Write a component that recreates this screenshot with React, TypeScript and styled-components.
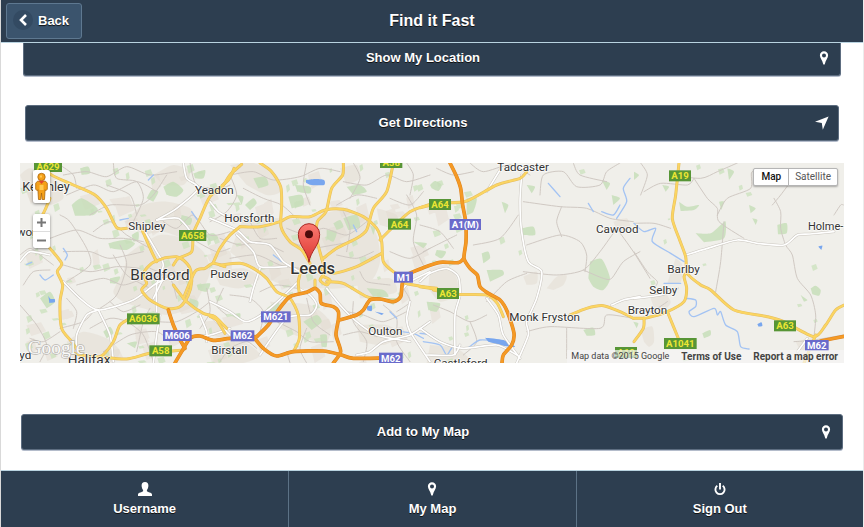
import React from "react";
import styled, { createGlobalStyle } from "styled-components";

const GlobalStyle = createGlobalStyle`
  *, *::before, *::after { box-sizing: border-box; }
  body {
    margin: 0;
    background: #fff;
    font-family: "Liberation Sans", Arial, sans-serif;
  }
  button { font-family: inherit; cursor: pointer; }
`;

const navy = "#2d3e50";

const Page = styled.div`
  display: flex;
  flex-direction: column;
  min-height: 100vh;
  border-left: 1px solid #d9d9d9;
  border-right: 1px solid #ececec;
`;

const Header = styled.header`
  display: grid;
  grid-template-columns: 1fr auto 1fr;
  align-items: center;
  padding: 3px 5px;
  background: ${navy};
  border-bottom: 1px solid #b9d3e0;
`;

const Title = styled.h1`
  margin: 0;
  color: #fff;
  font-size: 16px;
  line-height: 20px;
  text-shadow: 0 1px 0 #111;
`;

const BackButton = styled.button`
  display: flex;
  align-items: center;
  justify-self: start;
  gap: 5px;
  height: 36px;
  padding: 0 12px 2px 6px;
  color: #fff;
  font-size: 13px;
  font-weight: bold;
  text-shadow: 0 1px 1px #111;
  background: #3b546d;
  border: 1px solid #5e7890;
  border-radius: 3px;
`;

const BackDisc = styled.span`
  display: grid;
  place-items: center;
  width: 20px;
  height: 20px;
  border-radius: 50%;
  background: #334a62;
`;

const Main = styled.main`
  display: flex;
  flex-direction: column;
  flex: 1;
  padding: 0 19px 19px;
`;

const ActionButton = styled.button<{ $inset: number; $docked?: boolean }>`
  display: flex;
  align-items: center;
  height: ${(p) => (p.$docked ? 33 : 36)}px;
  margin: 0 ${(p) => p.$inset}px;
  padding: ${(p) => (p.$docked ? "0 7px 3px" : "0 7px 1px")};
  color: #fff;
  font-size: 13px;
  font-weight: bold;
  text-shadow: 0 1px 0 #111;
  background: ${navy};
  border: 1px solid #5d6d80;
  border-top-width: ${(p) => (p.$docked ? 0 : 1)}px;
  border-radius: ${(p) => (p.$docked ? "0 0 3px 3px" : "3px")};
  box-shadow: 0 1px 0 #b4bccb;
`;

const ActionLabel = styled.span`
  flex: 1;
  text-align: center;
`;

const ActionIcon = styled.span`
  display: grid;
  place-items: center;
  width: 18px;
`;

const DirectionsRow = styled.div`
  display: grid;
  margin-top: 29px;
`;

const MapFrame = styled.section`
  position: relative;
  height: 200px;
  margin: 22px 0 51px;
  overflow: hidden;
  background: #f0efea;
  font-family: Roboto, sans-serif;
`;

const MapDrawing = styled.svg`
  display: block;
  width: 100%;
  height: 100%;
`;

const LeftControls = styled.div`
  position: absolute;
  top: 7px;
  left: 13px;
  display: flex;
  flex-direction: column;
  gap: 11px;
`;

const ControlBox = styled.div`
  width: 17px;
  background: #fff;
  border-radius: 2px;
  box-shadow: 0 1px 3px rgba(0, 0, 0, 0.45);
`;

const ControlButton = styled.button<{ $tall?: boolean }>`
  display: grid;
  place-items: center;
  width: 17px;
  height: ${(p) => (p.$tall ? 33 : 17)}px;
  padding: 0;
  background: none;
  border: 0;
  & + & { border-top: 1px solid #ddd; }
`;

const MapTypes = styled.div`
  position: absolute;
  top: 5px;
  right: 6px;
  display: flex;
  background: #fff;
  border: 1px solid #b5b5b5;
  border-radius: 2px;
  box-shadow: 0 1px 2px rgba(0, 0, 0, 0.3);
`;

const MapType = styled.button<{ $active?: boolean }>`
  height: 16px;
  padding: 0 7px;
  background: none;
  border: 0;
  color: ${(p) => (p.$active ? "#111" : "#565656")};
  font-size: 10px;
  line-height: 16px;
  font-weight: ${(p) => (p.$active ? 500 : 400)};
  & + & { padding: 0 6px; border-left: 1px solid #b5b5b5; }
`;

const Attribution = styled.div`
  position: absolute;
  right: 0;
  bottom: 0;
  display: flex;
  gap: 12px;
  padding: 0 6px 0 4px;
  color: #444;
  font-size: 10px;
  line-height: 13px;
  background: rgba(245, 245, 245, 0.7);
`;

const Credit = styled.span`
  font-size: 9px;
`;

const MapLink = styled.a`
  color: #444;
  font-weight: bold;
  text-decoration: none;
`;

const Footer = styled.nav`
  display: grid;
  grid-template-columns: repeat(3, 1fr);
  background: ${navy};
  border-top: 1px solid #b9d3e0;
`;

const Tab = styled.a`
  display: flex;
  flex-direction: column;
  align-items: center;
  gap: 4px;
  padding: 10px 0;
  color: #fff;
  font-size: 13px;
  line-height: 16px;
  font-weight: bold;
  text-decoration: none;
  text-shadow: 0 1px 0 #111;
  & + & { border-left: 1px solid #5c7286; }
`;

const PinIcon = () => (
  <svg width="10" height="16" viewBox="0 0 10 16" aria-hidden="true">
    <path fill="#fff" fillRule="evenodd" d="M5 1.2a4.1 4.1 0 0 1 4.1 4.2c0 2.500-2.500 4.600-3.200 8.300a.9.9 0 0 1-1.800 0C3.400 10 .9 7.900.9 5.400A4.100 4.100 0 0 1 5 1.200zm0 2.200a2 2 0 1 0 0 4 2 2 0 0 0 0-4z" />
  </svg>
);

const ArrowIcon = () => (
  <svg width="14" height="14" viewBox="0 0 14 14" aria-hidden="true">
    <path fill="#fff" d="M13.600.4 0 5.800l6.800 1.100 1 6.800z" />
  </svg>
);

const UserIcon = () => (
  <svg width="16" height="16" viewBox="0 0 16 16" aria-hidden="true">
    <path fill="#fff" d="M8 1c2.300 0 3.500 1.500 3.400 3.800-.1 1.700-.7 3.300-1.500 4.200v1.300c.6.900 5.100 1.300 5.100 3.300v1.400H1v-1.400c0-2 4.500-2.400 5.100-3.300V9C5.300 8.100 4.700 6.500 4.600 4.800 4.500 2.500 5.700 1 8 1z" />
  </svg>
);

const PowerIcon = () => (
  <svg width="14" height="16" viewBox="0 0 14 16" fill="none" stroke="#fff" strokeWidth="1.900" aria-hidden="true">
    <path d="M7 2v6.500M4.300 4.800a4.600 4.600 0 1 0 5.400 0" />
  </svg>
);

const BackIcon = () => (
  <svg width="10" height="12" viewBox="0 0 10 12" fill="none" stroke="#fff" strokeWidth="2.600" aria-hidden="true">
    <path d="M8 1 3 6l5 5" />
  </svg>
);

const Pegman = () => (
  <svg width="15" height="29" viewBox="0 0 15 29" aria-hidden="true">
    <g fill="#f5a11a" stroke="#a9660c" strokeWidth=".8">
      <path d="M3.500 9.200h8l1.800 2v6l-1.500 1.500-.7-1-.6 9.800H8.200L7.500 21l-.7 6.500H4.500l-.6-9.800-.7 1-1.500-1.500v-6z" />
      <circle cx="7.500" cy="5" r="3.700" />
    </g>
    <path fill="#e2472f" d="M4.600 8.800h5.800L7.500 12z" />
    <path fill="#ffcb55" d="M5.500 13h4v5h-4zM6 3.500h2v2H6z" />
  </svg>
);

type Pt = [number, number];

/* Parses "x,y x,y" and draws a smooth line through the points. */
const curve = (src: string, dx = 0) => {
  const p = src.split(" ").map((s) => {
    const [x, y] = s.split(",").map(Number);
    return [x + dx, y] as Pt;
  });
  let d = `M${p[0][0]} ${p[0][1]}`;
  for (let i = 0; i < p.length - 1; i++) {
    const a = p[Math.max(i - 1, 0)];
    const b = p[i];
    const c = p[i + 1];
    const e = p[Math.min(i + 2, p.length - 1)];
    d += `C${b[0] + (c[0] - a[0]) / 8} ${b[1] + (c[1] - a[1]) / 8} ${c[0] - (e[0] - b[0]) / 8} ${c[1] - (e[1] - b[1]) / 8} ${c[0]} ${c[1]}`;
  }
  return d;
};

/* The map is drawn in four sheets, west to east, each with its own x origin. */
type Sheet = {
  x: number;
  urban: string[];
  green: string[];
  lanes: string[];
  white: string[];
  water: string[];
  lakes: string[];
  main: string[];
  motorway: string[];
};

const sheets: Sheet[] = [
  {
    x: 0,
    urban: [
      "30,60 60,40 120,60 150,90 160,130 120,150 60,140",
      "345,200 400,150 470,140 540,160 560,210 530,250 460,230 400,240",
      "390,270 450,240 520,250 580,290 600,350 570,420 540,460 470,480 400,460 340,440 310,410 340,350 350,300",
      "430,60 490,30 540,50 520,90 460,90",
      "170,560 220,530 290,550 330,590 300,620 190,620",
      "590,300 660,290 660,390 620,370",
      "580,500 630,500 660,550 600,540",
    ],
    green: [
      "185,150 215,130 262,160 250,180 195,182",
      "460,95 490,80 520,105 500,125 470,120",
      "295,265 340,255 375,265 350,285 300,280",
      "410,130 425,105 445,110 430,140",
      "90,430 120,410 135,440 110,460",
      "585,240 610,235 625,250 600,260",
      "280,530 300,515 310,535 290,550",
      "515,180 545,190 540,210 510,205",
      "365,240 385,230 385,255 370,260",
      "540,430 565,440 560,460 535,450",
      "210,40 235,35 240,55 215,60",
      "560,390 600,385 590,410 565,405",
      "300,370 330,365 320,385 300,385",
      "350,565 380,560 375,580",
      "550,55 585,45 580,70 555,70",
    ],
    lanes: [
      "160,60 230,50 290,65 350,35 420,60 500,50",
      "170,120 250,90 310,110 380,80 440,110",
      "240,180 300,150 390,150 430,120 470,60",
      "120,250 200,225 270,250 340,250 400,260",
      "160,330 240,350 320,335 390,340",
      "160,290 240,290 300,310 400,290",
      "170,380 240,330 230,280 180,200 150,180",
      "200,390 280,370 340,390 400,370",
      "30,300 60,280 90,300 130,330",
      "270,460 320,420 350,330 330,270",
      "240,520 300,490 350,500 400,540 430,620",
      "30,450 80,510 110,570 90,620",
      "150,520 220,500 250,470",
      "380,590 400,500 420,460",
      "540,24 560,90 630,100 660,90",
      "310,24 320,70 380,80 400,130 370,200",
      "280,590 360,540 440,530 480,560",
      "590,400 600,470 570,520",
      "640,400 620,450 650,480",
      "460,200 500,220 550,180 600,240 660,230",
      "300,440 340,470 390,450",
      "40,390 70,350 120,345",
      "60,550 100,560 150,530",
      "430,370 490,350 530,380",
      "420,340 480,370 500,430",
      "250,230 300,200 350,240 420,280",
      "170,430 200,470 190,520",
      "310,300 350,360 420,400",
      "440,500 500,500 560,470 600,440",
      "200,100 190,60 150,30",
      "380,180 360,120 290,90",
      "560,260 620,290 660,280",
    ],
    white: [
      "405,230 440,290 460,330 440,390 440,470",
      "520,24 530,70 565,100 500,160 440,195",
      "440,195 505,190 550,240",
      "160,380 210,430 265,465 370,435 440,385 520,350",
      "265,465 230,480 200,540 200,590",
      "265,465 300,540 310,620",
      "30,320 60,290 120,300",
      "570,480 590,530 590,560",
      "540,545 600,540 660,520",
      "600,140 625,170 660,190",
      "450,480 440,540 430,624",
      "460,370 430,430",
    ],
    water: ["415,75 430,60", "545,170 562,195", "160,280 172,300 165,315", "90,360 105,375 130,360", "330,195 355,190", "50,328 65,322"],
    lakes: ["115,422 122,432 134,432 134,442 118,444"],
    main: [
      "85,24 125,60 190,90 255,120 290,160 320,218 350,220",
      "120,130 105,165 95,185",
      "118,278 155,325 142,350 158,390 150,440 155,520 185,560 215,605",
      "395,222 425,290 440,320",
      "460,310 425,325 400,355 410,385 395,405 420,435 470,460 510,455 535,420 545,380 540,340 520,315 500,305 465,308",
      "672,40 655,75 600,125 570,190 550,235 545,290 505,310 490,330",
      "490,390 530,440 580,475 615,485 650,520",
      "520,430 555,350 585,340 610,325 645,335",
      "610,322 630,280 660,240 690,215",
      "190,595 270,605 310,560 330,510 370,485",
      "270,605 350,612 420,595 520,585",
    ],
    motorway: [
      "475,465 490,510 508,550 525,580",
      "495,624 515,590 540,550 570,543 610,556 660,550 740,545",
    ],
  },
  {
    x: 600,
    urban: [
      "60,30 130,24 200,60 210,110 170,120 110,90",
      "100,190 210,190 290,190 390,165 460,190 500,240 510,320 480,380 390,400 320,400 250,400 170,370 110,330 60,290",
      "390,40 440,30 450,70 410,90",
      "440,380 540,370 560,410 500,425 450,430",
      "180,440 300,450 360,500 350,560 280,550 210,520",
      "10,350 100,340 150,370 90,400 30,390",
      "500,160 560,180 560,220 510,210",
      "440,510 530,510 570,540 520,570 450,560",
      "10,570 100,560 150,600 100,624 10,624",
    ],
    green: [
      "130,70 165,65 175,90 145,100",
      "235,125 275,120 280,150 245,160",
      "255,90 300,95 300,115 262,110",
      "410,95 450,90 470,110 430,120",
      "400,190 440,180 450,215 415,225",
      "470,400 520,405 535,425 490,425",
      "280,500 320,480 335,500 305,525",
      "350,225 380,230 370,260 350,250",
      "105,150 130,130 140,145 120,165",
      "170,460 200,440 210,455 190,475",
      "370,205 390,195 400,215 380,225",
      "520,430 560,430 550,450",
      "80,120 100,125 95,150",
      "330,540 350,540 350,575 335,575",
      "480,210 495,220 490,240",
      "60,480 90,475 90,495",
      "610,260 650,265 640,280",
    ],
    lanes: [
      "60,60 130,50 190,75 270,65 330,40 390,50",
      "100,100 160,130 215,150 260,190",
      "290,24 280,90 300,150",
      "400,80 470,90 530,60 590,80 660,60",
      "380,150 440,120 500,130",
      "30,250 90,270 150,260 220,290",
      "60,310 140,300 210,330 270,340",
      "230,220 290,240 340,220 410,240 470,200",
      "380,300 440,310 490,290",
      "540,290 600,310 660,280",
      "590,120 620,180 610,260 640,330",
      "430,440 430,500 470,560 460,620",
      "290,430 310,500 360,540",
      "60,420 120,430 160,470 150,530",
      "200,500 260,530 300,560 370,560",
      "30,620 60,580 110,560 140,580",
      "520,450 560,490 560,560 600,620",
      "580,400 600,440 560,470",
      "450,350 470,380 540,390",
      "540,130 600,150 640,110",
      "0,200 50,170 80,120 60,60",
      "150,410 200,390 260,400",
      "230,590 240,624",
      "400,540 450,530 500,545",
      "430,24 450,70 420,130",
      "240,260 300,280 370,270 430,260",
      "400,170 420,220 410,290",
      "120,200 150,250 200,250",
      "590,24 610,60 600,120",
      "410,470 460,480 520,500 590,470",
      "290,520 270,580 290,624",
    ],
    white: [
      "0,190 80,225 120,260 180,270 220,320 270,350",
      "80,240 130,290 150,335 230,335",
      "0,440 60,470 110,500 180,460 265,380",
      "265,400 300,420 320,450 300,480 230,490 150,600",
      "350,400 390,450 440,500 500,540 600,560",
      "440,600 480,590 520,560 600,540 660,500",
      "600,440 590,490 600,530 660,620",
      "150,340 130,400 120,440",
      "580,400 600,380 660,350",
      "0,480 30,510 60,540",
    ],
    water: ["190,300 215,320", "540,470 560,490", "575,530 610,535 640,550", "430,210 440,230"],
    lakes: [
      "288,75 315,72 342,75 342,90 305,90 288,83",
      "470,455 485,452 485,468 472,466",
      "495,470 520,475 515,480",
    ],
    main: [
      "0,115 30,105 60,60 95,28",
      "150,24 185,50 212,95 215,150 213,215 240,260 275,285 300,325",
      "90,215 150,215 210,200 240,185 300,185 345,165 400,163 460,185 500,220 515,260 520,320 550,350 580,365",
      "400,24 398,60 365,100 348,170 322,200 320,250 335,310",
      "550,24 530,110 490,160 470,225 440,250 380,280 340,310",
      "660,148 600,170 540,225 510,255",
      "515,295 440,335 370,355 330,340",
      "30,330 90,325 130,340 170,370 200,410 240,430 265,480 268,550 250,590",
      "335,310 345,350 330,375 350,390 360,375 340,365",
      "350,380 400,385 470,425 510,432",
      "275,340 265,380 268,415",
      "315,375 315,400",
      "585,385 640,395 680,400",
      "0,484 20,495 45,535",
    ],
    motorway: [
      "140,545 175,510 205,465 240,425 290,412 315,400 330,415 334,445 370,455 385,470 385,495 378,540 392,590 370,624",
      "760,312 745,323 690,322 640,338 590,360 577,385 572,425 550,440 510,432 480,435 460,465 440,480 388,495",
      "130,545 160,580 200,603 250,590 340,588 395,600 430,610 560,608",
    ],
  },
  {
    x: 1230,
    urban: [
      "30,340 80,330 110,370 110,420 60,440 25,400",
      "380,400 410,365 440,362 430,390 400,405",
      "310,365 350,350 350,385 320,390",
      "30,570 110,580 150,624 20,624",
      "580,200 620,190 630,220 590,225",
    ],
    green: [
      "510,320 545,312 570,370 550,405 520,395 505,370",
      "30,90 45,78 65,90 55,108 35,100",
      "140,130 170,130 160,170 140,180",
      "185,295 205,290 210,310 190,325",
      "200,345 245,345 250,360 210,380",
      "305,220 340,215 345,240 310,240",
      "490,525 520,518 525,540 500,542",
      "50,285 78,290 65,310 45,300",
      "320,90 345,95 335,115",
      "245,140 265,150 255,175",
      "545,75 570,85 560,105",
      "20,440 60,445 50,470 25,465",
      "575,120 600,130 580,150",
      "640,500 655,505 650,520",
    ],
    lanes: [
      "150,24 190,50 270,30 330,60",
      "310,140 420,155 500,160 570,190 640,200",
      "425,155 410,200 425,245",
      "320,270 420,240 480,260 500,300 495,350",
      "310,350 410,360 490,345 540,290 590,220",
      "490,345 550,370 575,370 610,320 660,290",
      "200,440 260,380 320,355",
      "360,120 370,60 430,50 470,95 540,90 560,50 600,24",
      "50,40 100,60 160,50",
      "160,270 240,250 295,180",
      "320,530 390,515 540,520 560,480 640,490",
      "440,520 440,610",
      "40,450 90,470 150,500 200,480",
      "150,500 170,560 130,600",
      "0,210 60,230 100,280",
      "10,290 50,270 110,240",
      "590,220 640,290 690,370",
      "460,24 480,60 560,80",
    ],
    white: [
      "305,60 300,140 305,230 325,320 365,350 350,430 320,500 325,540 290,624",
      "240,45 200,110",
      "0,380 30,355 80,340 115,365 120,420 105,480 105,600",
      "0,520 60,560 130,580 230,570 290,600",
      "200,430 235,480 250,540 300,610",
      "575,450 610,435 660,425",
      "20,600 100,600 120,570",
    ],
    water: [
      "10,560 60,570 80,600 100,575 140,580 180,555 250,560",
      "385,85 420,125",
      "505,145 520,170",
      "545,170 580,180 600,150",
      "630,70 610,100 620,140 590,190",
      "0,535 30,540 60,560",
    ],
    lakes: ["195,548 250,555 285,575 250,572 205,560"],
    main: [
      "0,158 60,145 140,138 230,90 300,70 320,50",
      "40,405 110,418 200,420 232,445 250,485",
      "0,395 60,405",
      "450,480 500,460 550,452 600,470 640,490",
    ],
    motorway: [
      "90,24 110,65 122,100 128,150 137,200 138,260 132,310 150,340 172,360 180,395 205,415 240,435 262,470 282,535 275,570 250,600 246,624",
    ],
  },
  {
    x: 1872,
    urban: ["50,430 80,400 110,440 90,465 60,460", "20,525 55,515 60,560 45,575 30,560", "485,560 540,550 560,580 500,590", "125,310 145,330 140,380 100,385"],
    green: [
      "185,235 230,235 260,210 275,200 270,250 210,262",
      "135,140 160,155 195,150 180,165 140,168",
      "430,210 458,205 458,235 432,238",
      "530,400 545,392 560,405 555,422 535,418",
      "500,420 520,435 510,440",
      "205,535 228,525 230,540 210,550",
      "255,140 270,140 262,165",
      "85,90 105,95 95,110",
      "345,150 365,160 350,175",
      "355,190 370,195 365,210",
      "280,40 300,50 285,75",
      "0,50 15,60 0,75",
    ],
    lanes: [
      "30,110 80,85 160,90 180,70",
      "20,24 40,60 20,120",
      "180,70 220,130 250,160 255,200 330,250",
      "270,200 260,320 245,410",
      "250,180 280,130 350,100 355,50 420,90 470,80",
      "0,205 60,205 110,220",
      "420,130 440,170 440,220 455,270 475,300 490,370 530,420 545,480 540,545",
      "470,80 440,120 415,150",
      "600,180 620,150 628,150",
      "0,290 40,350 70,380 60,400",
      "110,60 200,70 250,50 310,24",
      "0,460 50,470 100,440",
      "480,560 540,555 628,540",
    ],
    white: ["155,300 220,280 310,255 370,265 450,270 490,240 528,237 600,230", "0,430 80,420 130,400", "490,590 520,550"],
    water: [
      "0,205 30,230 65,220 55,260 110,295 150,320",
      "90,385 140,385",
      "155,430 185,435 185,455 165,470 180,485 240,460 250,480 260,470 275,510 310,530 320,575 345,582",
    ],
    lakes: ["370,508 382,502 385,513 374,515", "553,275 565,272 562,285"],
    main: [
      "135,24 125,120 115,190 135,250 155,305 160,355 200,390 230,405 300,465 400,485 450,500 540,545 575,510 605,465 635,448",
      "0,490 40,488 100,470 150,440 158,400 150,365 160,350",
      "100,470 135,555",
      "0,560 28,520 30,490",
      "545,540 520,600 510,624",
    ],
    motorway: ["560,558 635,543"],
  },
];

/* Small woods and built-up blocks, denser in the west; a fixed seed keeps them in place. */
const scatter = (count: number, start: number, reach: number, size: number) => {
  let seed = start;
  const next = () => {
    seed = (seed * 16807) % 2147483647;
    return seed / 2147483647;
  };
  return Array.from({ length: count }, () => {
    const x = Math.round(30 + next() * reach);
    const y = Math.round(24 + next() * 600);
    const w = Math.round(size / 2 + next() * size);
    const h = Math.round(size / 3 + next() * size);
    return `M${x} ${y}l${w} ${-Math.round(h / 3)} ${Math.round(w / 3)} ${h} ${-w} ${Math.round(h / 2)}z`;
  }).join("");
};

const copses = scatter(130, 4177, 1350, 14) + scatter(40, 911, 2440, 12);
const blocks = scatter(70, 7351, 1250, 32);

const towns: { t: string; x: number; y: number; s?: number; w?: number }[] = [
  { t: "Keighley", x: 37, y: 108, s: 38 },
  { t: "Yeadon", x: 555, y: 117 },
  { t: "Shipley", x: 355, y: 226 },
  { t: "Horsforth", x: 643, y: 201 },
  { t: "wor", x: 20, y: 244 },
  { t: "Bradford", x: 361, y: 375, s: 46 },
  { t: "Pudsey", x: 601, y: 370 },
  { t: "Leeds", x: 841, y: 358, s: 50, w: 500 },
  { t: "Halifax", x: 173, y: 627, s: 41 },
  { t: "yd", x: 28, y: 612 },
  { t: "Birstall", x: 604, y: 597 },
  { t: "Oulton", x: 1075, y: 539 },
  { t: "Tadcaster", x: 1462, y: 48 },
  { t: "Cawood", x: 1758, y: 234 },
  { t: "Monk Fryston", x: 1498, y: 498 },
  { t: "Castleford", x: 1271, y: 636 },
  { t: "Brayton", x: 1853, y: 477 },
  { t: "Barlby", x: 1972, y: 354 },
  { t: "Selby", x: 1918, y: 417 },
  { t: "Holme-", x: 2394, y: 225, s: 33 },
];

const shields: { t: string; x: number; y: number; w: number; m?: boolean }[] = [
  { t: "A629", x: 72, y: 18, w: 84 },
  { t: "A658", x: 507, y: 225, w: 82 },
  { t: "A6036", x: 351, y: 475, w: 98 },
  { t: "A58", x: 418, y: 571, w: 68 },
  { t: "M606", x: 459, y: 525, w: 86, m: true },
  { t: "M62", x: 662, y: 526, w: 71, m: true },
  { t: "M621", x: 753, y: 469, w: 89, m: true },
  { t: "A58", x: 1110, y: 6, w: 67 },
  { t: "A64", x: 1134, y: 191, w: 69 },
  { t: "M1", x: 1152, y: 350, w: 57, m: true },
  { t: "M62", x: 1107, y: 593, w: 71, m: true },
  { t: "A64", x: 1257, y: 132, w: 66 },
  { t: "A1(M)", x: 1319, y: 192, w: 94, m: true },
  { t: "A63", x: 1281, y: 399, w: 66 },
  { t: "A19", x: 1815, y: 576, w: 66 },
  { t: "A19", x: 1977, y: 46, w: 66 },
  { t: "A1041", x: 1962, y: 549, w: 98 },
  { t: "A63", x: 2292, y: 496, w: 66 },
  { t: "M62", x: 2385, y: 555, w: 71, m: true },
];

type Layer = Exclude<keyof Sheet, "x">;

const Lines = ({ layer, color, width }: { layer: Layer; color: string; width: number }) => (
  <g fill="none" stroke={color} strokeWidth={width} strokeLinejoin="round" strokeLinecap="round">
    {sheets.map((s) => s[layer].map((line) => <path key={s.x + line} d={curve(line, s.x)} />))}
  </g>
);

const Areas = ({ layer, color, opacity = 1 }: { layer: Layer; color: string; opacity?: number }) => (
  <g fill={color} opacity={opacity}>
    {sheets.map((s) => s[layer].map((area) => <path key={s.x + area} d={`${curve(area, s.x)}Z`} />))}
  </g>
);

const LeedsMap = () => (
  <MapDrawing viewBox="30 24 2472 600" preserveAspectRatio="xMidYMid slice" role="img" aria-label="Map of Leeds">
    <defs>
      <linearGradient id="marker" x1="0" y1="0" x2="0" y2="1">
        <stop offset="0" stopColor="#fb7a72" />
        <stop offset="1" stopColor="#dc362f" />
      </linearGradient>
    </defs>
    <Areas layer="urban" color="#e6dfd6" opacity={0.6} />
    <path d={blocks} fill="#e3dbd1" opacity=".5" />
    <path d={copses} fill="#cde2bf" opacity=".8" />
    <Areas layer="green" color="#c8dfba" opacity={0.85} />
    <Lines layer="lanes" color="#d0c9c3" width={3} />
    <Lines layer="water" color="#a3c3f3" width={4} />
    <Areas layer="lakes" color="#78a6ee" />
    <Lines layer="white" color="#cac6bf" width={8} />
    <Lines layer="white" color="#ffffff" width={5} />
    <Lines layer="main" color="#e4bd62" width={9} />
    <Lines layer="main" color="#fbd562" width={6} />
    <Lines layer="motorway" color="#dd8420" width={11} />
    <Lines layer="motorway" color="#f59a25" width={8} />
    <g fill="#333" stroke="#fff" strokeWidth="5" strokeOpacity=".75" strokeLinejoin="round" paintOrder="stroke">
      {towns.map((t) => (
        <text key={t.t} x={t.x} y={t.y} fontSize={t.s ?? 35} fontWeight={t.w ?? 400}>
          {t.t}
        </text>
      ))}
    </g>
    {shields.map((s) => (
      <g key={`${s.t}${s.x}`}>
        <rect x={s.x} y={s.y} width={s.w} height="33" fill={s.m ? "#6a6bcb" : "#579536"} />
        <text x={s.x + s.w / 2} y={s.y + 27} fontSize="29" fontWeight="bold" textAnchor="middle" fill={s.m ? "#fff" : "#ece634"}>
          {s.t}
        </text>
      </g>
    ))}
    <path fill="url(#marker)" stroke="#a92823" strokeWidth="3" d="M897 322C893 288 865 272 865 238a32 32 0 0 1 64 0C929 272 901 288 897 322Z" />
    <circle cx="897" cy="238" r="12" fill="#4e0b0b" />
    <text x="53" y="597" fontSize="58" fontFamily="Liberation Serif, serif" fill="#fafafa" stroke="#b9b6b1" strokeWidth="4" paintOrder="stroke">
      Google
    </text>
  </MapDrawing>
);

const App = () => (
  <>
    <GlobalStyle />
    <Page>
      <Header>
        <BackButton type="button">
          <BackDisc>
            <BackIcon />
          </BackDisc>
          Back
        </BackButton>
        <Title>Find it Fast</Title>
      </Header>
      <Main>
        <ActionButton type="button" $inset={3} $docked>
          <ActionLabel>Show My Location</ActionLabel>
          <ActionIcon>
            <PinIcon />
          </ActionIcon>
        </ActionButton>
        <DirectionsRow>
          <ActionButton type="button" $inset={5}>
            <ActionLabel>Get Directions</ActionLabel>
            <ActionIcon>
              <ArrowIcon />
            </ActionIcon>
          </ActionButton>
        </DirectionsRow>
        <MapFrame>
          <LeedsMap />
          <LeftControls>
            <ControlBox>
              <ControlButton type="button" $tall aria-label="Street View">
                <Pegman />
              </ControlButton>
            </ControlBox>
            <ControlBox>
              <ControlButton type="button" aria-label="Zoom in">
                <svg width="9" height="9" viewBox="0 0 9 9" stroke="#777" strokeWidth="2">
                  <path d="M0 4.500h9M4.500 0v9" />
                </svg>
              </ControlButton>
              <ControlButton type="button" aria-label="Zoom out">
                <svg width="9" height="9" viewBox="0 0 9 9" stroke="#777" strokeWidth="2">
                  <path d="M0 4.500h9" />
                </svg>
              </ControlButton>
            </ControlBox>
          </LeftControls>
          <MapTypes>
            <MapType type="button" $active>
              Map
            </MapType>
            <MapType type="button">Satellite</MapType>
          </MapTypes>
          <Attribution>
            <Credit>Map data ©2015 Google</Credit>
            <MapLink href="#terms">Terms of Use</MapLink>
            <MapLink href="#report">Report a map error</MapLink>
          </Attribution>
        </MapFrame>
        <ActionButton type="button" $inset={1}>
          <ActionLabel>Add to My Map</ActionLabel>
          <ActionIcon>
            <PinIcon />
          </ActionIcon>
        </ActionButton>
      </Main>
      <Footer>
        <Tab href="#username">
          <UserIcon />
          Username
        </Tab>
        <Tab href="#my-map">
          <PinIcon />
          My Map
        </Tab>
        <Tab href="#sign-out">
          <PowerIcon />
          Sign Out
        </Tab>
      </Footer>
    </Page>
  </>
);

export default App;
